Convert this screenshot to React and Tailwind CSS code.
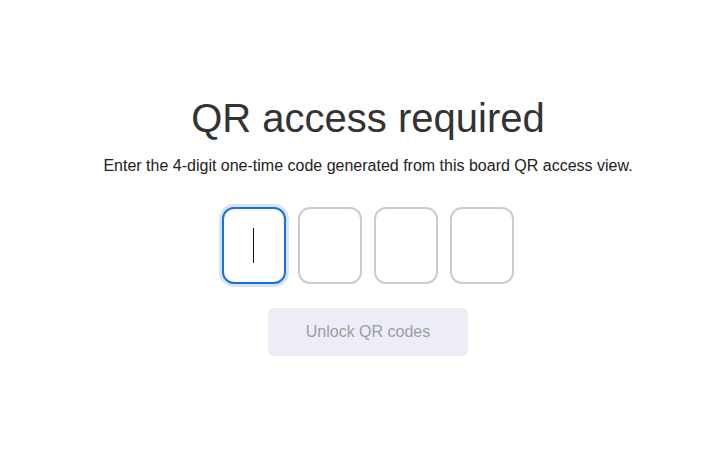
import React, { useState } from 'react';

const App = () => {
  const [digits, setDigits] = useState(['', '', '', '']);

  const handleChange = (i, value) => {
    const next = [...digits];
    next[i] = value.replace(/\D/g, '').slice(-1);
    setDigits(next);
  };

  const complete = digits.every(d => d !== '');

  return (
    <div className="min-h-screen bg-white flex items-center justify-center pl-3 pb-3 font-['Liberation_Sans',Arial,sans-serif]">
      <div className="flex flex-col items-center">
        <h1 className="text-[40px] leading-[48px] text-[#333333]">QR access required</h1>
        <p className="mt-3 text-base leading-6 text-[#222222]">
          Enter the 4-digit one-time code generated from this board QR access view.
        </p>

        <div className="mt-[29px] flex gap-3">
          {digits.map((d, i) => (
            <div key={i} className="relative">
              <input
                type="text"
                inputMode="numeric"
                value={d}
                onChange={(e) => handleChange(i, e.target.value)}
                className={`w-16 h-[77px] rounded-xl border-2 bg-white text-center text-[30px] text-[#222] outline-none caret-transparent ${i === 0 ? 'border-[#1a6fe0] ring-[3px] ring-[#d6e4fb]' : 'border-[#cbcbd3]'}`}
              />
              {/* caret of the focused box */}
              {i === 0 && !d && (
                <span className="pointer-events-none absolute left-[31px] top-[21px] h-[35px] w-px bg-[#111]" />
              )}
            </div>
          ))}
        </div>

        <button
          disabled={!complete}
          className="mt-6 w-[200px] h-12 rounded-md bg-[#ededf5] text-base text-[#9c9ca8]"
        >
          Unlock QR codes
        </button>
      </div>
    </div>
  );
};

export default App;
